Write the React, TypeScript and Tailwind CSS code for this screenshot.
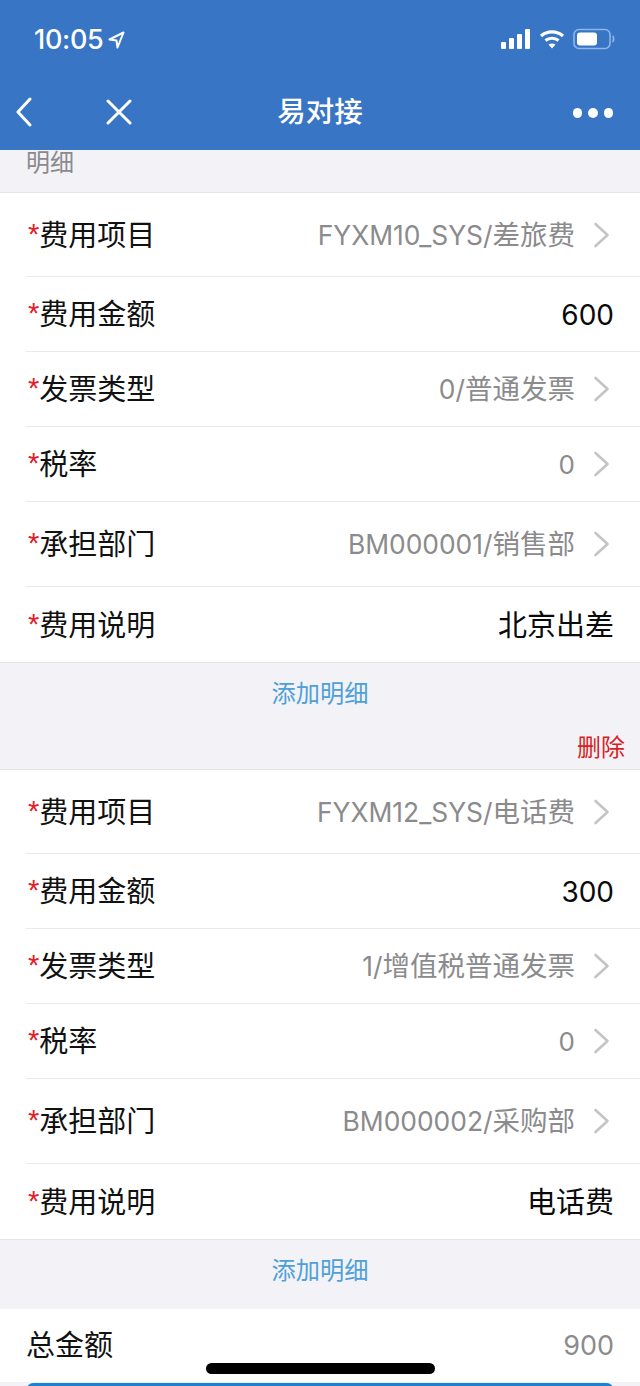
const font = { fontFamily: '"Inter", "Noto Sans CJK SC", sans-serif' };

type RowData = { label: string; code?: string; value: string; chevron?: boolean; height: string; digits?: boolean };

function Chevron() {
  return (
    <svg width="18" height="26" viewBox="0 0 18 26" fill="none" className="ml-[18px] mr-[29px] shrink-0">
      <path d="M2.5 2 L14.5 13 L2.5 24" stroke="#c4c4c6" strokeWidth="2.6" strokeLinecap="round" strokeLinejoin="round" />
    </svg>
  );
}

function Row({ label, code, value, chevron, height, digits, last }: RowData & { last?: boolean }) {
  return (
    <div className={`ml-[26px] flex items-center ${height} ${last ? "" : "border-b border-[#e9e9eb]"}`}>
      <div className="mt-[1px] flex items-center text-[29px] leading-none text-[#111111]">
        <span className="font-['Liberation_Sans'] text-[#e2202a] text-[29px] ml-[2px] -mt-[2px]">*</span>
        <span>{label}</span>
      </div>
      <div className="flex-1" />
      {chevron ? (
        <>
          <span className="mt-[2px] flex items-baseline leading-none text-[#8b8b8d]">
            {code ? <span className="text-[26.4px] leading-none">{code}</span> : null}
            <span className={`${code ? "text-[27.5px]" : "text-[26px]"} leading-none`}>{value}</span>
          </span>
          <Chevron />
        </>
      ) : (
        <span className={`mt-[2px] mr-[26px] ${digits ? "text-[28px]" : "text-[29px]"} leading-none text-[#0a0a0a]`}>{value}</span>
      )}
    </div>
  );
}

function Section({ rows }: { rows: RowData[] }) {
  return (
    <div className="bg-white border-t border-b border-[#e6e6ea]">
      {rows.map((r, i) => (
        <Row key={i} {...r} last={i === rows.length - 1} />
      ))}
    </div>
  );
}

function AddRow() {
  return (
    <div className="h-[62px] flex items-center justify-center text-[24.25px] leading-none text-[#4fa0d8]">添加明细</div>
  );
}

const first: RowData[] = [
  { label: "费用项目", code: "FYXM10_SYS/", value: "差旅费", chevron: true, height: "h-[84px]" },
  { label: "费用金额", value: "600", digits: true, height: "h-[75px]" },
  { label: "发票类型", code: "0/", value: "普通发票", chevron: true, height: "h-[75px]" },
  { label: "税率", value: "0", chevron: true, height: "h-[75px]" },
  { label: "承担部门", code: "BM000001/", value: "销售部", chevron: true, height: "h-[85px]" },
  { label: "费用说明", value: "北京出差", height: "h-[75px]" },
];

const second: RowData[] = [
  { label: "费用项目", code: "FYXM12_SYS/", value: "电话费", chevron: true, height: "h-[84px]" },
  { label: "费用金额", value: "300", digits: true, height: "h-[75px]" },
  { label: "发票类型", code: "1/", value: "增值税普通发票", chevron: true, height: "h-[75px]" },
  { label: "税率", value: "0", chevron: true, height: "h-[75px]" },
  { label: "承担部门", code: "BM000002/", value: "采购部", chevron: true, height: "h-[85px]" },
  { label: "费用说明", value: "电话费", height: "h-[75px]" },
];

export default function App() {
  return (
    <div className="relative w-[640px] h-[1386px] overflow-hidden bg-[#f3f3f7]" style={font}>
      <header className="h-[150px] bg-[#3875c5] text-white flex flex-col">
        <div className="h-[77px] flex items-start justify-between pl-[34px] pr-[25px] pt-[25px]">
          <div className="flex items-center gap-[5px]">
            <span className="text-[27px] leading-[30px] font-medium tracking-[-0.3px]">10:05</span>
            <svg width="17" height="18" viewBox="0 0 17 18" fill="none">
              <path d="M15.5 1.5 L1.5 8.5 L8.5 9.5 L9.5 16.5 Z" stroke="white" strokeWidth="2" strokeLinejoin="round" />
            </svg>
          </div>
          <div className="flex items-center gap-[8px] h-[28px]">
            <svg width="30" height="20" viewBox="0 0 30 20" fill="white">
              <rect x="0" y="13" width="5" height="7" rx="1" />
              <rect x="8" y="9" width="5" height="11" rx="1" />
              <rect x="16" y="5" width="5" height="15" rx="1" />
              <rect x="24" y="0" width="5" height="20" rx="1" />
            </svg>
            <svg width="26" height="20" viewBox="0 0 26 20" fill="none" stroke="white" strokeWidth="3.2">
              <path d="M2 7 C8 1.5 18 1.5 24 7" />
              <path d="M6.5 11.5 C10 8.5 16 8.5 19.5 11.5" />
              <path d="M13 19.5 L9.5 15.5 C11.5 14 14.5 14 16.5 15.5 Z" fill="white" stroke="none" />
            </svg>
            <svg width="42" height="22" viewBox="0 0 42 22" fill="none">
              <rect x="1" y="1.5" width="36" height="19" rx="5" stroke="#8fb5e6" strokeWidth="1.6" />
              <rect x="4" y="4.5" width="20" height="13" rx="3" fill="white" />
              <path d="M39.5 8 C41 9 41 13 39.5 14" stroke="#8fb5e6" strokeWidth="1.8" />
            </svg>
          </div>
        </div>
        <div className="relative h-[73px] flex items-center justify-center">
          <svg width="18" height="30" viewBox="0 0 18 30" fill="none" className="absolute left-[15px] top-[20px]">
            <path d="M15 2 L3 15 L15 28" stroke="white" strokeWidth="3" strokeLinecap="round" strokeLinejoin="round" />
          </svg>
          <svg width="26" height="26" viewBox="0 0 26 26" fill="none" className="absolute left-[106px] top-[22px]">
            <path d="M2 2 L24 24 M24 2 L2 24" stroke="white" strokeWidth="3" strokeLinecap="round" />
          </svg>
          <span className="text-[28.5px] leading-none font-medium -mt-[2px]">易对接</span>
          <div className="absolute right-[27px] top-[31px] flex gap-[6px]">
            <span className="size-[9.5px] rounded-full bg-white" />
            <span className="size-[9.5px] rounded-full bg-white" />
            <span className="size-[9.5px] rounded-full bg-white" />
          </div>
        </div>
      </header>

      <div className="h-[42px] pl-[26px] pt-[1px] text-[24px] leading-[24px] text-[#8a8a8c]">明细</div>
      <Section rows={first} />
      <AddRow />
      <div className="h-[44px] flex items-end justify-end pr-[15px] pb-[9px] text-[24px] leading-none text-[#d81e1e]">删除</div>
      <Section rows={second} />
      <AddRow />
      <div className="h-[7px]" />
      <div className="h-[73px] bg-white pl-[26px] pr-[26px] flex items-center justify-between">
        <span className="text-[29px] leading-none text-[#111111]">总金额</span>
        <span className="text-[27px] leading-none text-[#8b8b8d]">900</span>
      </div>
      <div className="h-[1px]" />
      <div className="mx-[27px] h-[40px] rounded-[6px] bg-[#1a82d2]" />

      <div className="absolute left-[206px] top-[1363px] w-[229px] h-[11px] rounded-full bg-black" />
    </div>
  );
}
